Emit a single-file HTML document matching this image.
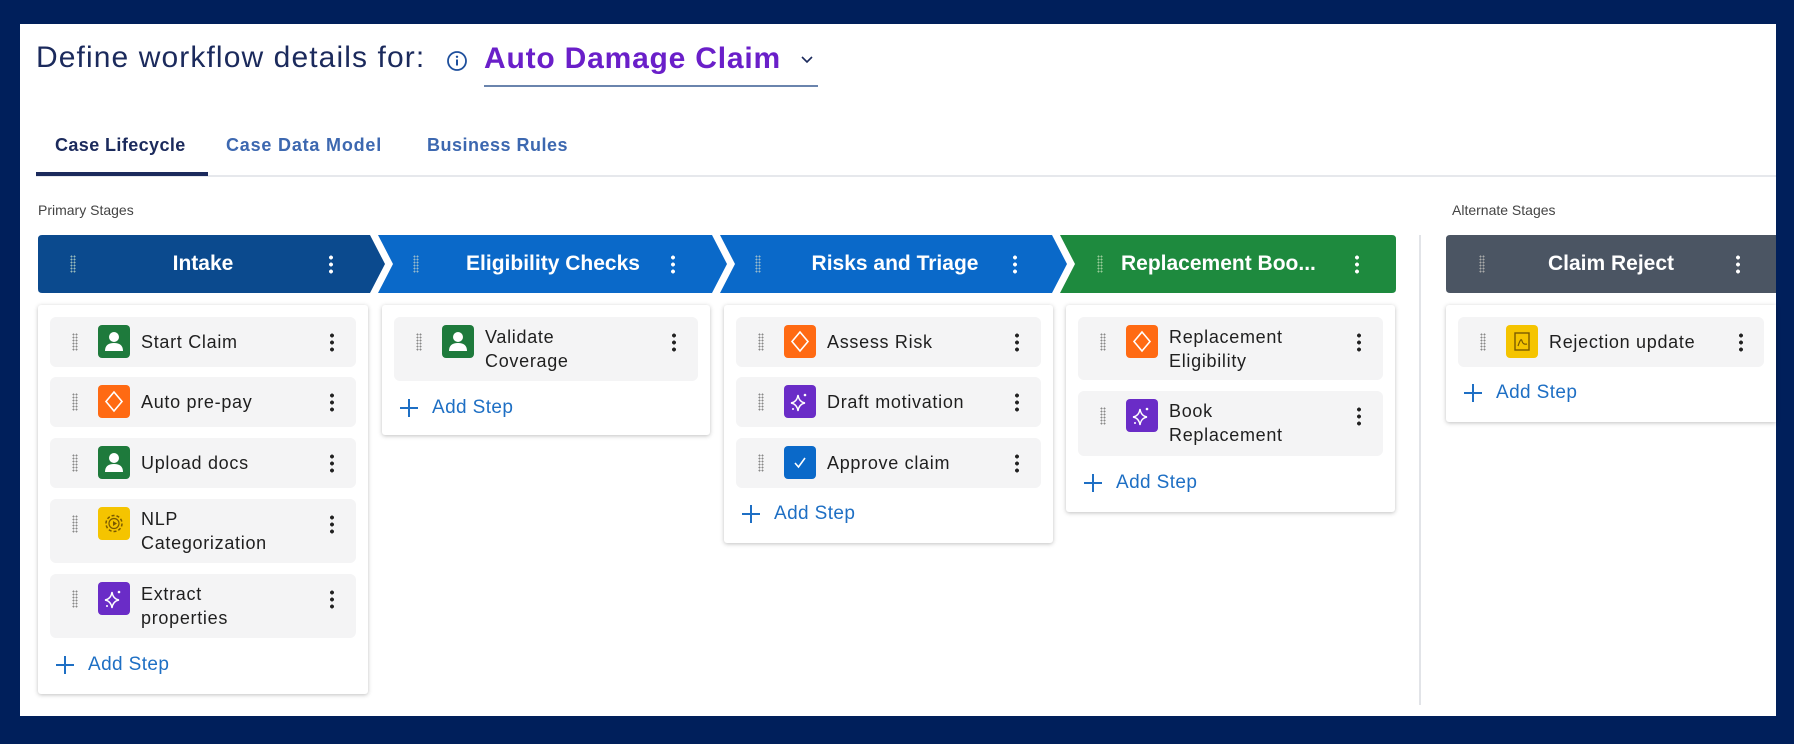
<!DOCTYPE html>
<html><head><meta charset="utf-8"><style>
*{box-sizing:border-box;margin:0;padding:0}
body{width:1794px;height:744px;background:#001f5b;font-family:"Liberation Sans",sans-serif;position:relative;overflow:hidden}
#panel{position:absolute;left:20px;top:24px;width:1756px;height:692px;background:#fff;overflow:hidden}
.abs{position:absolute}
.title{left:36px;top:41px;font-size:30px;color:#1b2a5c;white-space:nowrap;letter-spacing:1.1px}
.claim{left:484px;top:42px;font-size:30px;font-weight:bold;color:#6a1fc9;letter-spacing:0.8px;white-space:nowrap}
.tab{top:135px;font-size:18px;font-weight:bold;color:#3d68b0;white-space:nowrap}
.card{position:absolute;background:#fff;border-radius:3px;box-shadow:0 1px 4px rgba(0,0,0,.25)}
.step{position:absolute;left:12px;right:12px;background:#f4f4f5;border-radius:6px}
.step .ic{position:absolute;left:48px;top:8px;width:32px;height:33px;border-radius:4px}
.step .tx{position:absolute;left:91px;font-size:18px;color:#1f1f1f;line-height:24px;letter-spacing:0.7px;white-space:nowrap}
.drag{position:absolute;width:6px;height:18px;background-image:radial-gradient(circle,#888 0.8px,transparent 1.1px);background-size:3px 3px}
.step .drag{left:22px !important}
.keb{position:absolute;width:4px;height:20px;background-image:radial-gradient(circle,#222 1.8px,transparent 2.1px);background-size:4px 7px}
.add{position:absolute;left:50px;font-size:19px;color:#1e6fc4;letter-spacing:0.4px;white-space:nowrap}
.add svg{position:absolute;left:-33px;top:1px}
.hd{position:absolute;top:235px;height:58px;color:#fff;font-size:21px;font-weight:bold;line-height:58px;text-align:center;white-space:nowrap}
</style></head><body>
<div id="panel"></div>
<div class="abs title">Define workflow details for:</div>
<svg class="abs" style="left:446px;top:50px" width="22" height="22" viewBox="0 0 22 22"><circle cx="11" cy="11" r="9" fill="none" stroke="#1e4f9c" stroke-width="1.8"/><rect x="10" y="9.5" width="2" height="6" fill="#1e4f9c"/><circle cx="11" cy="6.8" r="1.2" fill="#1e4f9c"/></svg>
<div class="abs claim">Auto Damage Claim</div>
<svg class="abs" style="left:800px;top:55px" width="14" height="10"><path d="M2 2 L7 7 L12 2" fill="none" stroke="#1b2a5c" stroke-width="1.6"/></svg>
<div class="abs" style="left:484px;top:85px;width:334px;height:2px;background:#6a84ad"></div>
<div class="abs tab" style="left:55px;color:#1b2a5c;letter-spacing:0.4px">Case Lifecycle</div>
<div class="abs tab" style="left:226px;letter-spacing:0.8px">Case Data Model</div>
<div class="abs tab" style="left:427px;letter-spacing:0.5px">Business Rules</div>
<div class="abs" style="left:36px;top:175px;width:1740px;height:2px;background:#e6e8ec"></div>
<div class="abs" style="left:36px;top:172px;width:172px;height:4px;background:#1b2a5c"></div>
<div class="abs" style="left:38px;top:202px;font-size:14px;color:#444">Primary Stages</div>
<div class="abs" style="left:1452px;top:202px;font-size:14px;color:#444">Alternate Stages</div>
<div class="abs" style="left:1419px;top:235px;width:2px;height:470px;background:#e2e4e8"></div>

<svg class="abs" style="left:0;top:0" width="1794" height="744">
<path d="M42 235 L370 235 L385 264 L370 293 L42 293 Q38 293 38 289 L38 239 Q38 235 42 235Z" fill="#0b4a8e"/>
<path d="M378 235 L712 235 L727 264 L712 293 L378 293 L393 264Z" fill="#0a69c9"/>
<path d="M720 235 L1052 235 L1067 264 L1052 293 L720 293 L735 264Z" fill="#0a69c9"/>
<path d="M1060 235 L1392 235 Q1396 235 1396 239 L1396 289 Q1396 293 1392 293 L1060 293 L1075 264Z" fill="#1e8a3e"/>
<path d="M1450 235 L1776 235 L1776 293 L1450 293 Q1446 293 1446 289 L1446 239 Q1446 235 1450 235Z" fill="#4b5563"/>
</svg>
<div class="hd" style="left:38px;width:330px">Intake</div>
<div class="hd" style="left:393px;width:320px">Eligibility Checks</div>
<div class="hd" style="left:735px;width:320px">Risks and Triage</div>
<div class="hd" style="left:1075px;width:300px;text-align:left;padding-left:46px">Replacement Boo...</div>
<div class="hd" style="left:1446px;width:330px">Claim Reject</div>
<div class="drag" style="left:70px;top:255px;background-image:radial-gradient(circle,#9bb 0.8px,transparent 1.1px)"></div>
<div class="drag" style="left:413px;top:255px;background-image:radial-gradient(circle,#9bc 0.8px,transparent 1.1px)"></div>
<div class="drag" style="left:755px;top:255px;background-image:radial-gradient(circle,#9bc 0.8px,transparent 1.1px)"></div>
<div class="drag" style="left:1097px;top:255px;background-image:radial-gradient(circle,#9c9 0.8px,transparent 1.1px)"></div>
<div class="drag" style="left:1479px;top:255px;background-image:radial-gradient(circle,#aaa 0.8px,transparent 1.1px)"></div>
<div class="keb" style="left:329px;top:254px;background-image:radial-gradient(circle,#fff 1.8px,transparent 2.1px)"></div>
<div class="keb" style="left:671px;top:254px;background-image:radial-gradient(circle,#fff 1.8px,transparent 2.1px)"></div>
<div class="keb" style="left:1013px;top:254px;background-image:radial-gradient(circle,#fff 1.8px,transparent 2.1px)"></div>
<div class="keb" style="left:1355px;top:254px;background-image:radial-gradient(circle,#fff 1.8px,transparent 2.1px)"></div>
<div class="keb" style="left:1736px;top:254px;background-image:radial-gradient(circle,#fff 1.8px,transparent 2.1px)"></div>

<svg width="0" height="0" style="position:absolute"><defs>
<symbol id="person" viewBox="0 0 32 33"><circle cx="16" cy="12" r="5" fill="#fff"/><path d="M7 26 Q7 18 16 18 Q25 18 25 26Z" fill="#fff"/></symbol>
<symbol id="diamond" viewBox="0 0 32 33"><path d="M16 7 L24 16.5 L16 26 L8 16.5Z" fill="none" stroke="#fff" stroke-width="1.6"/></symbol>
<symbol id="spark" viewBox="0 0 32 33"><path d="M14 10 Q15 17 21 18 Q15 19 14 26 Q13 19 7 18 Q13 17 14 10Z" fill="none" stroke="#fff" stroke-width="1.4"/><circle cx="21" cy="10" r="1.3" fill="#fff"/><circle cx="9" cy="24" r="1" fill="#fff"/></symbol>
<symbol id="gear" viewBox="0 0 32 33"><circle cx="16" cy="16.5" r="8" fill="none" stroke="#7a5a00" stroke-width="1.5" stroke-dasharray="3 2"/><circle cx="16" cy="16.5" r="5" fill="none" stroke="#7a5a00" stroke-width="1.2"/><path d="M15 14 L19 16.5 L15 19Z" fill="#7a5a00"/></symbol>
<symbol id="check" viewBox="0 0 32 33"><path d="M11 17 L14.5 21 L21 12" fill="none" stroke="#fff" stroke-width="1.6"/></symbol>
<symbol id="pdf" viewBox="0 0 32 33"><rect x="9" y="8" width="14" height="17" fill="none" stroke="#7a5a00" stroke-width="1.4"/><path d="M12 21 Q15 12 16 16 Q17 20 21 19" fill="none" stroke="#7a5a00" stroke-width="1.2"/></symbol>
<symbol id="plus" viewBox="0 0 20 20"><path d="M10 1 V19 M1 10 H19" stroke="#1e6fc4" stroke-width="2"/></symbol>
</defs></svg>

<!-- Intake card -->
<div class="card" style="left:38px;top:305px;width:330px;height:389px">
 <div class="step" style="top:12px;height:50px"><div class="drag" style="top:16px"></div><svg class="ic" style="background:#1e7a3c"><use href="#person"/></svg><div class="tx" style="top:13px">Start Claim</div><div class="keb" style="left:280px;top:15px"></div></div>
 <div class="step" style="top:72px;height:50px"><div class="drag" style="top:16px"></div><svg class="ic" style="background:#ff6a13"><use href="#diamond"/></svg><div class="tx" style="top:13px">Auto pre-pay</div><div class="keb" style="left:280px;top:15px"></div></div>
 <div class="step" style="top:133px;height:50px"><div class="drag" style="top:16px"></div><svg class="ic" style="background:#1e7a3c"><use href="#person"/></svg><div class="tx" style="top:13px">Upload docs</div><div class="keb" style="left:280px;top:15px"></div></div>
 <div class="step" style="top:194px;height:64px"><div class="drag" style="top:16px"></div><svg class="ic" style="background:#f5c400"><use href="#gear"/></svg><div class="tx" style="top:8px">NLP<br>Categorization</div><div class="keb" style="left:280px;top:15px"></div></div>
 <div class="step" style="top:269px;height:64px"><div class="drag" style="top:16px"></div><svg class="ic" style="background:#6a2cc7"><use href="#spark"/></svg><div class="tx" style="top:8px">Extract<br>properties</div><div class="keb" style="left:280px;top:15px"></div></div>
 <div class="add" style="top:349px"><svg width="20" height="20"><use href="#plus"/></svg>Add Step</div>
</div>
<!-- Eligibility -->
<div class="card" style="left:382px;top:305px;width:328px;height:130px">
 <div class="step" style="top:12px;height:64px"><div class="drag" style="top:16px"></div><svg class="ic" style="background:#1e7a3c"><use href="#person"/></svg><div class="tx" style="top:8px">Validate<br>Coverage</div><div class="keb" style="left:278px;top:15px"></div></div>
 <div class="add" style="top:92px"><svg width="20" height="20"><use href="#plus"/></svg>Add Step</div>
</div>
<!-- Risks -->
<div class="card" style="left:724px;top:305px;width:329px;height:238px">
 <div class="step" style="top:12px;height:50px"><div class="drag" style="top:16px"></div><svg class="ic" style="background:#ff6a13"><use href="#diamond"/></svg><div class="tx" style="top:13px">Assess Risk</div><div class="keb" style="left:279px;top:15px"></div></div>
 <div class="step" style="top:72px;height:50px"><div class="drag" style="top:16px"></div><svg class="ic" style="background:#6a2cc7"><use href="#spark"/></svg><div class="tx" style="top:13px">Draft motivation</div><div class="keb" style="left:279px;top:15px"></div></div>
 <div class="step" style="top:133px;height:50px"><div class="drag" style="top:16px"></div><svg class="ic" style="background:#0a69c9"><use href="#check"/></svg><div class="tx" style="top:13px">Approve claim</div><div class="keb" style="left:279px;top:15px"></div></div>
 <div class="add" style="top:198px"><svg width="20" height="20"><use href="#plus"/></svg>Add Step</div>
</div>
<!-- Replacement -->
<div class="card" style="left:1066px;top:305px;width:329px;height:207px">
 <div class="step" style="top:12px;height:63px"><div class="drag" style="top:16px"></div><svg class="ic" style="background:#ff6a13"><use href="#diamond"/></svg><div class="tx" style="top:8px">Replacement<br>Eligibility</div><div class="keb" style="left:279px;top:15px"></div></div>
 <div class="step" style="top:86px;height:65px"><div class="drag" style="top:16px"></div><svg class="ic" style="background:#6a2cc7"><use href="#spark"/></svg><div class="tx" style="top:8px">Book<br>Replacement</div><div class="keb" style="left:279px;top:15px"></div></div>
 <div class="add" style="top:167px"><svg width="20" height="20"><use href="#plus"/></svg>Add Step</div>
</div>
<!-- Claim reject -->
<div class="card" style="left:1446px;top:305px;width:330px;height:117px;border-radius:3px 0 0 3px">
 <div class="step" style="top:12px;height:50px;right:12px"><div class="drag" style="top:16px"></div><svg class="ic" style="background:#f5c400"><use href="#pdf"/></svg><div class="tx" style="top:13px">Rejection update</div><div class="keb" style="left:281px;top:15px"></div></div>
 <div class="add" style="top:77px"><svg width="20" height="20"><use href="#plus"/></svg>Add Step</div>
</div>
</body></html>
